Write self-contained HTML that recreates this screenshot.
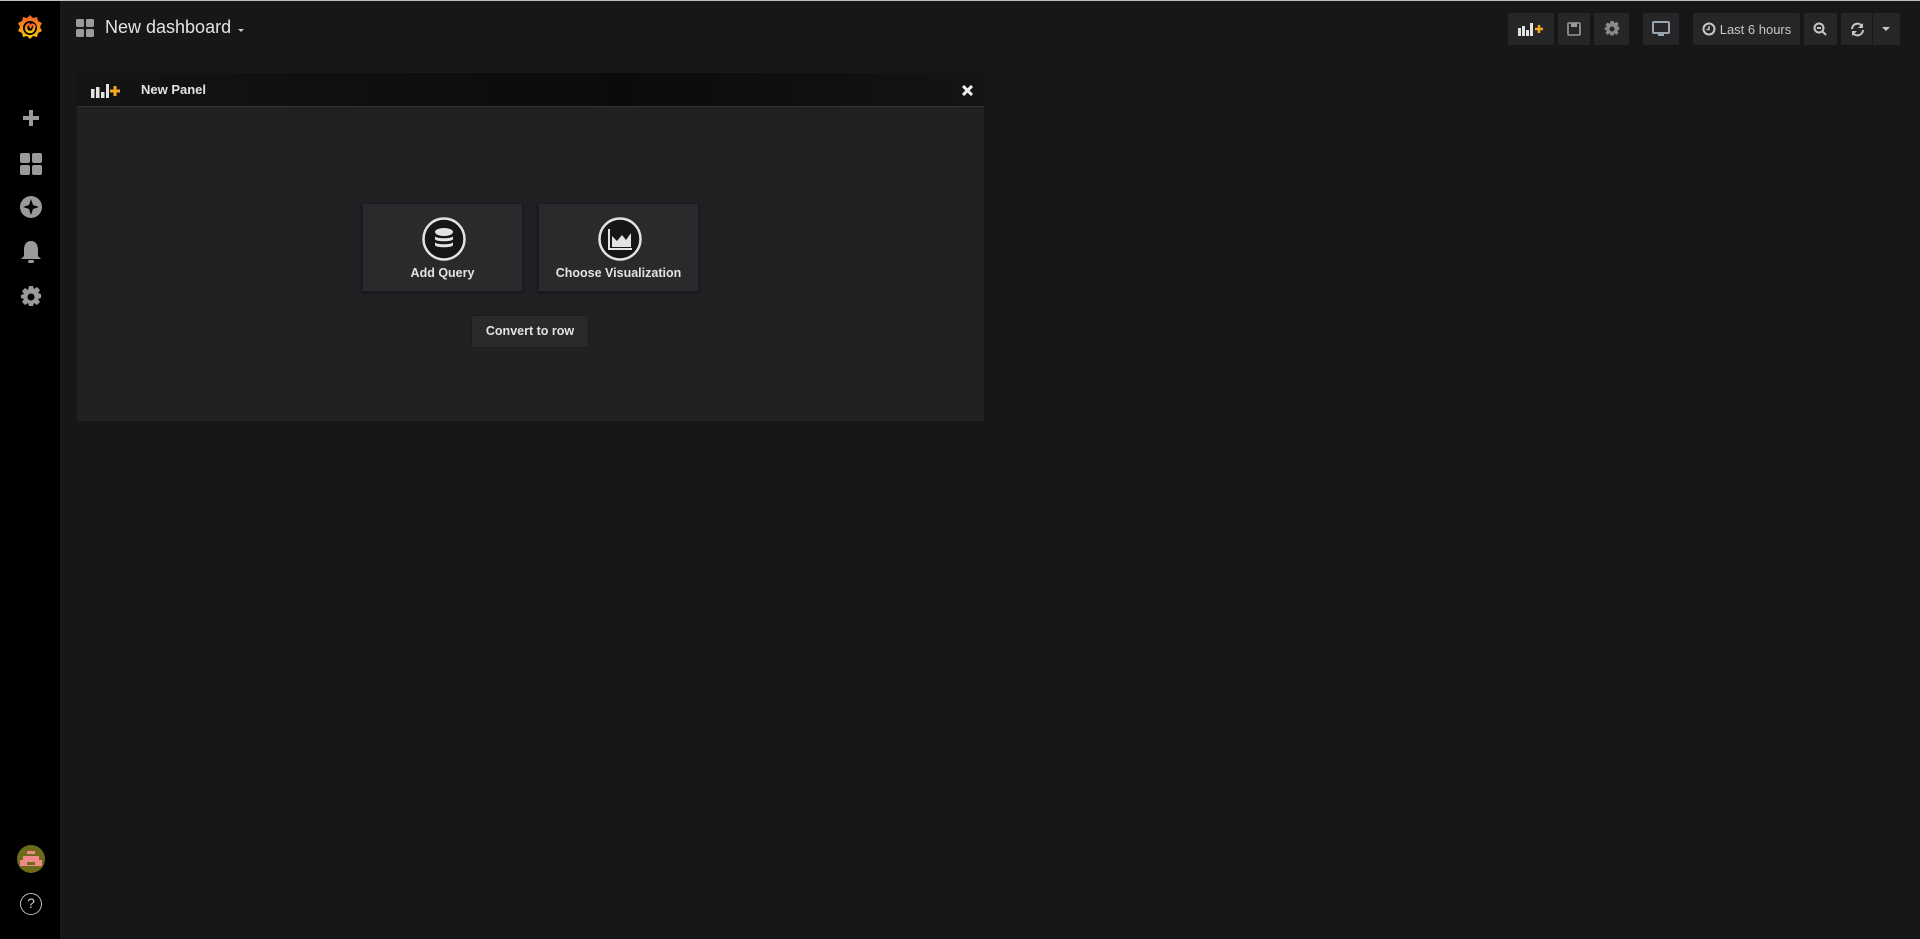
<!DOCTYPE html>
<html><head><meta charset="utf-8"><style>
*{margin:0;padding:0;box-sizing:border-box}
body{width:1920px;height:939px;background:#161719;font-family:"Liberation Sans",sans-serif;color:#d8d9da;position:relative;overflow:hidden}
.side{position:absolute;left:0;top:0;width:60px;height:939px;background:#000}
.abs{position:absolute}
.btn{position:absolute;top:13px;height:32px;background:#262628;border-radius:2px;display:flex;align-items:center;justify-content:center;color:#d8d9da;font-size:13px}
.panel{position:absolute;left:77px;top:73px;width:907px;height:348px;background:#212124}
.ph{height:34px;background:linear-gradient(90deg,#141414,#0b0b0b 60%,#141414);border-bottom:1px solid #333;position:relative}
.big{position:absolute;top:130px;width:161px;height:89px;background:#2a2a2c;border:1px solid #1c1c1e;border-radius:2px;box-shadow:0 1px 2px #111}
.big .lbl{position:absolute;left:0;right:0;top:62px;text-align:center;font-size:12.5px;font-weight:bold;color:#e3e3e3}
.big svg{position:absolute;left:59px;top:13px}
</style></head><body>
<div class="side">
<svg class="abs" style="left:15px;top:13px" width="30" height="30" viewBox="0 0 30 30"><defs><linearGradient id="g" x1="0" y1="1" x2="0" y2="0"><stop offset="0" stop-color="#fbca0a"/><stop offset="1" stop-color="#f05a28"/></linearGradient></defs><path fill="url(#g)" d="M15 2l3 3 4-1 1 4 4 2-2 4 2 4-4 2-1 4-4-1-3 3-3-3-4 1-1-4-4-2 2-4-2-4 4-2 1-4 4 1z"/><circle cx="15" cy="15" r="7" fill="#000"/><path d="M15 11a4 4 0 1 0 4 4 2 2 0 1 0-3 0" stroke="url(#g)" stroke-width="2.5" fill="none"/></svg>
<svg class="abs" style="left:23px;top:110px" width="16" height="16"><path d="M6 0h4v6h6v4h-6v6H6v-6H0V6h6z" fill="#9a9a9a"/></svg>
<svg class="abs" style="left:20px;top:153px" width="22" height="22"><rect width="10" height="10" rx="2" fill="#9a9a9a"/><rect x="12" width="10" height="10" rx="2" fill="#9a9a9a"/><rect y="12" width="10" height="10" rx="2" fill="#9a9a9a"/><rect x="12" y="12" width="10" height="10" rx="2" fill="#9a9a9a"/></svg>
<svg class="abs" style="left:20px;top:196px" width="22" height="22"><circle cx="11" cy="11" r="11" fill="#9a9a9a"/><path d="M11 3l2 6 6 2-6 2-2 6-2-6-6-2 6-2z" fill="#000"/></svg>
<svg class="abs" style="left:21px;top:240px" width="20" height="24"><path d="M10 1c5 0 7 4 7 9v6l3 3H0l3-3v-6c0-5 2-9 7-9z" fill="#9a9a9a"/><rect x="7" y="20" width="6" height="3" rx="1.5" fill="#9a9a9a"/></svg>
<svg class="abs" style="left:20px;top:286px" width="22" height="22" viewBox="0 0 22 22"><path fill="#9a9a9a" d="M9 0h4l1 3 3-2 3 3-2 3 3 1v4l-3 1 2 3-3 3-3-2-1 3H9l-1-3-3 2-3-3 2-3-3-1V9l3-1-2-3 3-3 3 2z"/><circle cx="11" cy="11" r="3.5" fill="#000"/></svg>
<div class="abs" style="left:17px;top:845px;width:28px;height:28px;border-radius:50%;background:#6b6b1a;overflow:hidden"><div class="abs" style="left:10px;top:6px;width:8px;height:3px;background:#f08a8a"></div><div class="abs" style="left:6px;top:11px;width:16px;height:4px;background:#f08a8a"></div><div class="abs" style="left:3px;top:15px;width:22px;height:6px;background:#f08a8a"></div><div class="abs" style="left:10px;top:17px;width:8px;height:3px;background:#6b6b1a"></div></div>
<div class="abs" style="left:20px;top:893px;width:22px;height:22px;border-radius:50%;border:1.5px solid #bbb;color:#ccc;font-size:14px;text-align:center;line-height:19px">?</div>
</div>
<div class="abs" style="left:0;top:0;width:1920px;height:1px;background:#bdbdbd"></div>
<svg class="abs" style="left:76px;top:19px" width="18" height="18"><rect width="8" height="8" rx="1.5" fill="#9a9a9a"/><rect x="10" width="8" height="8" rx="1.5" fill="#9a9a9a"/><rect y="10" width="8" height="8" rx="1.5" fill="#9a9a9a"/><rect x="10" y="10" width="8" height="8" rx="1.5" fill="#9a9a9a"/></svg>
<div class="abs" style="left:105px;top:17px;font-size:18px;color:#e3e3e3">New dashboard</div>
<div class="abs" style="left:238px;top:29px;border:3.5px solid transparent;border-top-color:#ccc;border-bottom:0"></div>

<div class="btn" style="left:1508px;width:46px"><svg width="26" height="14"><rect x="0" y="6" width="3" height="8" fill="#e3e3e3"/><rect x="4" y="4" width="3" height="10" fill="#e3e3e3"/><rect x="8" y="8" width="3" height="6" fill="#e3e3e3"/><rect x="12" y="1" width="3" height="13" fill="#e3e3e3"/><path d="M17 7h8M21 3v8" stroke="#f5a623" stroke-width="2.5"/></svg></div>
<div class="btn" style="left:1558px;width:32px"><svg width="14" height="14"><rect x="1" y="1" width="12" height="12" rx="1" fill="none" stroke="#9a9a9a" stroke-width="1.6"/><rect x="4" y="1" width="6" height="4" fill="#9a9a9a"/></svg></div>
<div class="btn" style="left:1594px;width:35px"><svg width="16" height="16" viewBox="0 0 22 22"><path fill="#8a8a8a" d="M9 0h4l1 3 3-2 3 3-2 3 3 1v4l-3 1 2 3-3 3-3-2-1 3H9l-1-3-3 2-3-3 2-3-3-1V9l3-1-2-3 3-3 3 2z"/><circle cx="11" cy="11" r="3.5" fill="#262628"/></svg></div>
<div class="btn" style="left:1643px;width:36px"><svg width="18" height="16"><rect x="1" y="1" width="16" height="11" rx="1" fill="none" stroke="#9aa5b1" stroke-width="2"/><rect x="6" y="13" width="6" height="2" fill="#9aa5b1"/></svg></div>
<div class="btn" style="left:1693px;width:107px;color:#c7c7c7;font-size:13px"><svg width="14" height="14" style="margin-right:4px"><circle cx="7" cy="7" r="5.5" fill="none" stroke="#c7c7c7" stroke-width="2"/><path d="M7 4v3.5H4.5" stroke="#c7c7c7" stroke-width="1.5" fill="none"/></svg>Last 6 hours</div>
<div class="btn" style="left:1804px;width:33px"><svg width="15" height="15"><circle cx="6" cy="6" r="4.5" fill="none" stroke="#c7c7c7" stroke-width="2"/><path d="M4 6h4M9 9l4 4" stroke="#c7c7c7" stroke-width="2"/></svg></div>
<div class="btn" style="left:1841px;width:59px;justify-content:flex-start;padding-left:9px"><svg width="15" height="15"><path d="M2 7a5.5 5.5 0 0 1 10-3M13 8a5.5 5.5 0 0 1-10 3" stroke="#c7c7c7" stroke-width="2" fill="none"/><path d="M13 1v5H8z M2 14V9h5z" fill="#c7c7c7"/></svg><div style="position:absolute;left:31px;top:0;width:1px;height:32px;background:#1a1a1c"></div><div style="position:absolute;left:41px;top:14px;border:4px solid transparent;border-top-color:#c7c7c7;border-bottom:0"></div></div>

<div class="panel">
<div class="ph">
<svg class="abs" style="left:14px;top:10px" width="30" height="15"><rect x="0" y="6" width="3.5" height="9" fill="#e3e3e3"/><rect x="5" y="4" width="3.5" height="11" fill="#e3e3e3"/><rect x="10" y="9" width="3.5" height="6" fill="#e3e3e3"/><rect x="15" y="1" width="3" height="14" fill="#e3e3e3"/><path d="M19 8h10M24 3v10" stroke="#f5a623" stroke-width="3"/></svg>
<div class="abs" style="left:64px;top:9px;font-size:13px;font-weight:bold;color:#e3e3e3">New Panel</div>
<svg class="abs" style="left:885px;top:12px" width="11" height="11"><path d="M1 1l9 9M10 1l-9 9" stroke="#eee" stroke-width="3"/></svg>
</div>
<div class="big" style="left:285px"><svg width="44" height="44"><circle cx="22" cy="22" r="20.5" fill="#161616" stroke="#e3e3e3" stroke-width="2.5"/><ellipse cx="22" cy="15" rx="9" ry="4" fill="#e3e3e3"/><path d="M13 19c0 3 18 3 18 0v3c0 3-18 3-18 0z M13 25c0 3 18 3 18 0v3c0 3-18 3-18 0z" fill="#e3e3e3"/></svg><div class="lbl">Add Query</div></div>
<div class="big" style="left:461px"><svg width="44" height="44"><circle cx="22" cy="22" r="20.5" fill="#161616" stroke="#e3e3e3" stroke-width="2.5"/><path d="M11 12v20h23" stroke="#e3e3e3" stroke-width="2" fill="none"/><path d="M14 30v-11l5 5 5-6 4 5 5-7v14z" fill="#e3e3e3"/></svg><div class="lbl">Choose Visualization</div></div>
<div class="abs" style="left:394px;top:242px;width:118px;height:33px;background:#2a2a2c;border:1px solid #1c1c1e;border-radius:2px;text-align:center;line-height:31px;font-size:12.5px;font-weight:bold;color:#e3e3e3">Convert to row</div>
</div>
</body></html>
